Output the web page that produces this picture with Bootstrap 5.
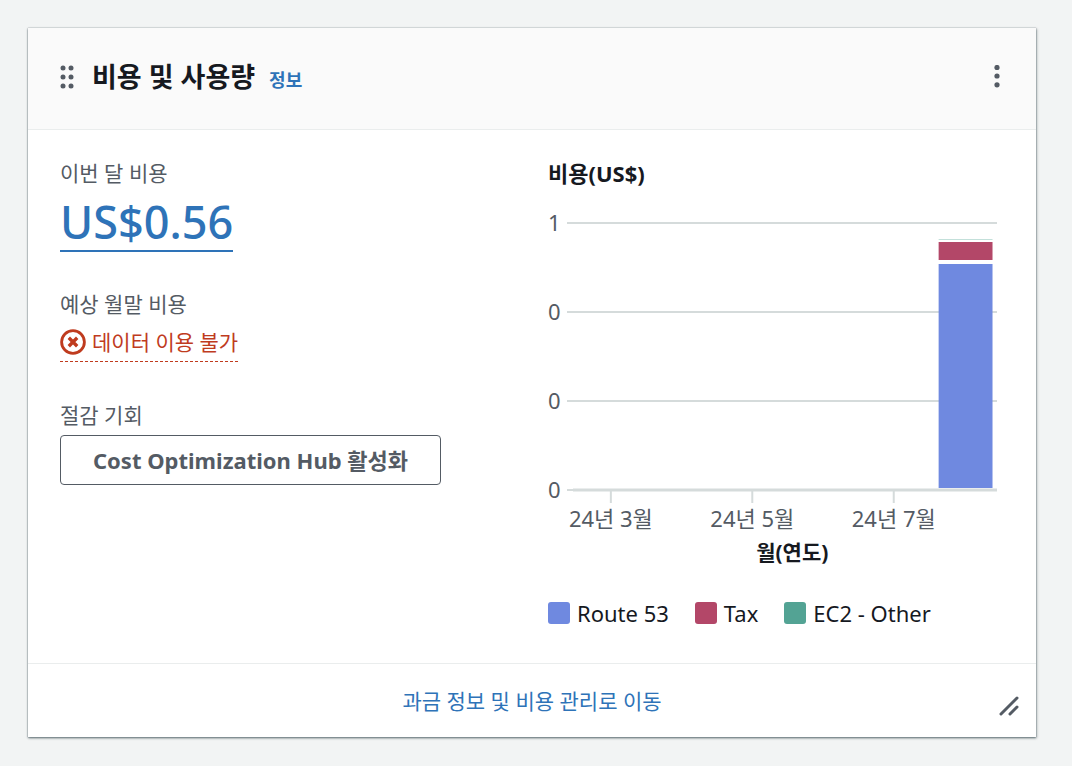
<!DOCTYPE html>
<html lang="ko">
<head>
<meta charset="utf-8">
<meta name="viewport" content="width=device-width, initial-scale=1">
<title>비용 및 사용량</title>
<link href="https://cdn.jsdelivr.net/npm/bootstrap@5.3.0/dist/css/bootstrap.min.css" rel="stylesheet">
<style>
  body { background: #f2f4f4; color: #16191f; font-family: "Noto Sans", "Noto Sans CJK KR", sans-serif; font-size: 22px; line-height: 32px; }
  .cost-page { padding: 28px 36px 28px 28px; }
  .cost-widget { --bs-card-border-width: 0; --bs-card-border-radius: 0; border-radius: 0; color: inherit; box-shadow: 0 1px 2px #001c2480, 1px 1px 3px #001c2433, 0 0 1px #001c2466; }
  .cost-widget > .card-header { background: #fafafa; border-bottom: 1px solid #eaeded; border-radius: 0; padding: 30px 31px 34px 32px; min-height: 102px; }
  .cost-widget > .card-body { padding: 27px 32px 34px; }
  .cost-widget > .card-footer { background: #fff; border-top: 1px solid #eaeded; border-radius: 0; padding: 20px 16px; min-height: 74px; }
  .title-group { gap: 14px; margin-left: 18px; }
  .widget-title { font-size: 27px; line-height: 36px; font-weight: 700; }
  .info-link { font-size: 18px; line-height: 24px; font-weight: 700; }
  a { color: #2e73b8; text-decoration: none; }
  .icon-btn { color: #545b64; background: none; border: 0; padding: 0; line-height: 0; }
  .caption { color: #545b64; font-size: 21px; line-height: 32px; font-weight: 400; }
  .amount { display: inline-block; font-size: 45px; font-weight: 500; line-height: 56px; padding-top: 5px; border-bottom: 2px solid; }
  .no-data { color: #bf3b1e; font-size: 21px; border-bottom: 1px dashed; line-height: 34px; padding-bottom: 2px; margin-top: 5px; }
  .hub-btn { --bs-btn-color: #545b64; --bs-btn-border-color: #545b64; --bs-btn-border-radius: 4px; --bs-btn-font-size: 22px; --bs-btn-line-height: 32px; --bs-btn-font-weight: 700; --bs-btn-padding-x: 32px; --bs-btn-padding-y: 8px; --bs-btn-bg: #fff; margin-top: 4px; }
  .stack { gap: 36px; }
  .chart-title { font-size: 22px; line-height: 32px; font-weight: 700; }
  .chart-wrap { padding-right: 7px; }
  .cost-chart { height: 373px; width: 100%; display: block; margin-top: 11px; overflow: visible; }
  .cost-chart text { font-size: 22px; fill: #545b64; }
  .cost-chart .axis-title { font-size: 21px; font-weight: 700; fill: #16191f; }
  .gridline { stroke: #d5dbdb; stroke-width: 2; }
  .baseline { stroke: #d5dbdb; stroke-width: 3; }
  .legend-list { gap: 26px; margin-top: 24px; }
  .legend-list li { gap: 7px; }
  .swatch { width: 22px; height: 22px; border-radius: 3px; }
  .footer-link { font-size: 21px; }
</style>
</head>
<body>
<main class="cost-page">
  <section class="card cost-widget">
    <header class="card-header d-flex align-items-center">
      <button class="icon-btn" type="button" aria-label="이동">
        <svg width="14" height="24" viewBox="0 0 14 24" fill="currentColor"><circle cx="3" cy="3" r="2.5"/><circle cx="11" cy="3" r="2.5"/><circle cx="3" cy="12" r="2.5"/><circle cx="11" cy="12" r="2.5"/><circle cx="3" cy="21" r="2.5"/><circle cx="11" cy="21" r="2.5"/></svg>
      </button>
      <div class="title-group d-flex align-items-baseline flex-grow-1">
        <h2 class="widget-title mb-0">비용 및 사용량</h2>
        <a class="info-link" href="#">정보</a>
      </div>
      <button class="icon-btn" type="button" aria-label="메뉴">
        <svg width="16" height="24" viewBox="0 0 16 24" fill="currentColor"><circle cx="8" cy="2.5" r="2.6"/><circle cx="8" cy="11" r="2.6"/><circle cx="8" cy="19.8" r="2.6"/></svg>
      </button>
    </header>
    <div class="card-body">
      <div class="row" style="--bs-gutter-x: 32px">
        <div class="col-6 d-flex flex-column stack">
          <div>
            <h3 class="caption mb-0">이번 달 비용</h3>
            <a class="amount" href="#">US$0.56</a>
          </div>
          <div>
            <h3 class="caption mb-0">예상 월말 비용</h3>
            <span class="no-data d-inline-flex align-items-center">
              <svg class="me-1" width="28" height="28" viewBox="0 0 28 28" fill="none" stroke="currentColor"><circle cx="13" cy="14" r="11.4" stroke-width="2.8"/><path d="M8.8 9.8l8.4 8.4m0-8.4l-8.4 8.4" stroke-width="3.4"/></svg>데이터 이용 불가
            </span>
          </div>
          <div>
            <h3 class="caption mb-0">절감 기회</h3>
            <button class="btn hub-btn" type="button">Cost Optimization Hub 활성화</button>
          </div>
        </div>
        <div class="col-6">
          <div class="chart-wrap">
            <h3 class="chart-title mb-0">비용(US$)</h3>
            <svg class="cost-chart" role="img" aria-label="월별 비용">
              <text x="0" y="31">1</text><text x="0" y="120">0</text><text x="0" y="209">0</text><text x="0" y="298">0</text>
              <line class="gridline" x1="19" x2="100%" y1="23" y2="23"/>
              <line class="gridline" x1="19" x2="100%" y1="112" y2="112"/>
              <line class="gridline" x1="19" x2="100%" y1="201" y2="201"/>
              <line class="gridline" x1="19" x2="100%" y1="290" y2="290"/>
              <line class="baseline" x1="25" x2="100%" y1="290" y2="290"/>
              <line class="gridline" x1="14%" x2="14%" y1="290" y2="303"/>
              <line class="gridline" x1="45.5%" x2="45.5%" y1="290" y2="303"/>
              <line class="gridline" x1="77%" x2="77%" y1="290" y2="303"/>
              <rect x="87%" y="64" width="12%" height="224" fill="#6f89e0"/>
              <rect x="87%" y="60" width="12%" height="4" fill="#fff"/>
              <rect x="87%" y="42" width="12%" height="18" fill="#b34768"/>
              <rect x="87%" y="39" width="12%" height="1" fill="#c3e0da"/>
              <g text-anchor="middle">
                <text x="14%" y="327">24년 3월</text>
                <text x="45.5%" y="327">24년 5월</text>
                <text x="77%" y="327">24년 7월</text>
                <text class="axis-title" x="54.4%" y="360">월(연도)</text>
              </g>
            </svg>
            <ul class="legend-list list-unstyled d-flex mb-0">
              <li class="d-flex align-items-center"><span class="swatch" style="background:#6f89e0"></span>Route 53</li>
              <li class="d-flex align-items-center"><span class="swatch" style="background:#b34768"></span>Tax</li>
              <li class="d-flex align-items-center"><span class="swatch" style="background:#53a394"></span>EC2 - Other</li>
            </ul>
          </div>
        </div>
      </div>
    </div>
    <footer class="card-footer d-flex align-items-center">
      <span class="swatch"></span>
      <a class="footer-link flex-grow-1 text-center" href="#">과금 정보 및 비용 관리로 이동</a>
      <button class="icon-btn align-self-end" type="button" aria-label="크기 조정">
        <svg width="22" height="22" viewBox="0 0 22 22" fill="none" stroke="currentColor" stroke-width="3" stroke-linecap="round"><path d="M3 19L19 3M12 19l7-7"/></svg>
      </button>
    </footer>
  </section>
</main>
<script src="https://cdn.jsdelivr.net/npm/bootstrap@5.3.0/dist/js/bootstrap.bundle.min.js"></script>
</body>
</html>
